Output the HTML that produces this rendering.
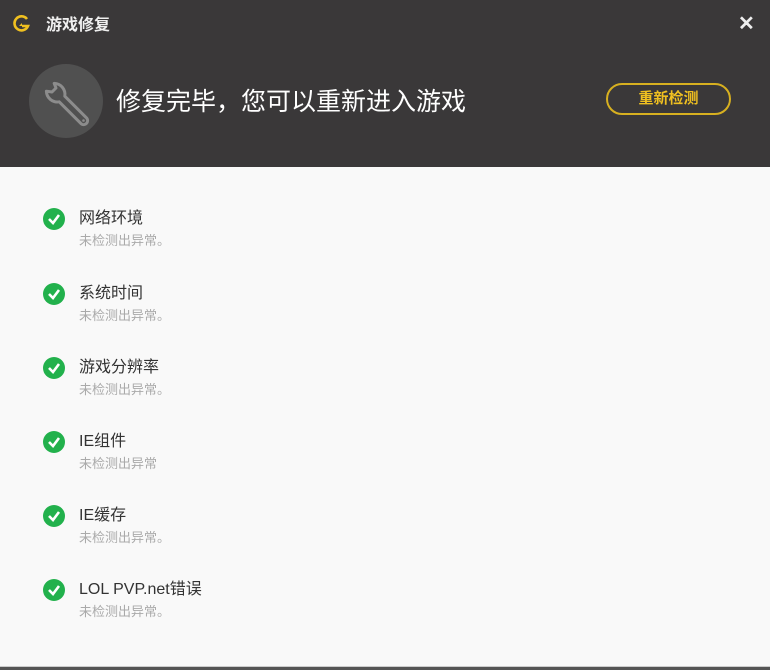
<!DOCTYPE html>
<html><head><meta charset="utf-8"><style>
*{margin:0;padding:0;box-sizing:border-box}
body{width:770px;height:670px;background:#fff;font-family:"Liberation Sans","Noto Sans CJK SC",sans-serif;position:relative;overflow:hidden}
.hd{position:absolute;left:0;top:0;width:770px;height:167px;background:#3a3839}
.bd{position:absolute;left:0;top:167px;width:770px;height:500px;background:#f9f9f9;border-bottom:1px solid #ccc}
.ft{position:absolute;left:0;top:667px;width:770px;height:3px;background:#555}
.t{position:absolute;left:46px;top:11px;color:#f0f0f0;font-size:16px;font-weight:bold}
.x{position:absolute;left:738px;top:11px;color:#eee;font-size:20px;font-weight:bold}
.circ{position:absolute;left:29px;top:64px;width:74px;height:74px;border-radius:50%;background:#505050}
.msg{position:absolute;left:116px;top:82px;color:#fff;font-size:25px}
.btn{position:absolute;left:606px;top:83px;width:125px;height:32px;border:2px solid #d7b020;border-radius:16px;color:#f0c020;font-size:15px;font-weight:bold;text-align:center;line-height:28px}
.it{position:absolute;left:43px}
.ck{position:absolute;left:0;top:2px;width:22px;height:22px;border-radius:50%;background:#22b14c}
.n{position:absolute;left:36px;top:-2px;font-size:16px;color:#333;white-space:nowrap}
.s{position:absolute;left:36px;top:24px;font-size:13px;color:#aaa;white-space:nowrap}
</style></head><body>
<div class="hd">
<svg style="position:absolute;left:13px;top:14px" width="18" height="20" viewBox="0 0 18 20"><path d="M14 5A7 7 0 1 0 15 12H9" fill="none" stroke="#f0c020" stroke-width="2.6"/><path d="M9 9l-3 3 3 0" fill="#f0c020"/></svg>
<div class="t">游戏修复</div>
<div class="x">✕</div>
<div class="circ"><svg width="74" height="74" viewBox="0 0 74 74"><path d="M35.8 32.2L57.8 54.2A4 4 0 0 1 52.2 59.8L30.2 37.8A11 11 0 0 1 17.4 27.2L23 28L27 24L25.2 19.4A11 11 0 0 1 35.8 32.2Z" fill="none" stroke="#8c8c8c" stroke-width="3" stroke-linejoin="round"/><circle cx="54.5" cy="56.5" r="1.3" fill="#8c8c8c"/></svg></div>
<div class="msg">修复完毕，您可以重新进入游戏</div>
<div class="btn">重新检测</div>
</div>
<div class="bd"></div>
<div class="ft"></div>
<div class="it" style="top:206px"><div class="ck"><svg width="22" height="22"><path d="M6 11l4 4 6-8" fill="none" stroke="#fff" stroke-width="2.6"/></svg></div><div class="n">网络环境</div><div class="s">未检测出异常。</div></div>
<div class="it" style="top:281px"><div class="ck"><svg width="22" height="22"><path d="M6 11l4 4 6-8" fill="none" stroke="#fff" stroke-width="2.6"/></svg></div><div class="n">系统时间</div><div class="s">未检测出异常。</div></div>
<div class="it" style="top:355px"><div class="ck"><svg width="22" height="22"><path d="M6 11l4 4 6-8" fill="none" stroke="#fff" stroke-width="2.6"/></svg></div><div class="n">游戏分辨率</div><div class="s">未检测出异常。</div></div>
<div class="it" style="top:429px"><div class="ck"><svg width="22" height="22"><path d="M6 11l4 4 6-8" fill="none" stroke="#fff" stroke-width="2.6"/></svg></div><div class="n">IE组件</div><div class="s">未检测出异常</div></div>
<div class="it" style="top:503px"><div class="ck"><svg width="22" height="22"><path d="M6 11l4 4 6-8" fill="none" stroke="#fff" stroke-width="2.6"/></svg></div><div class="n">IE缓存</div><div class="s">未检测出异常。</div></div>
<div class="it" style="top:577px"><div class="ck"><svg width="22" height="22"><path d="M6 11l4 4 6-8" fill="none" stroke="#fff" stroke-width="2.6"/></svg></div><div class="n">LOL PVP.net错误</div><div class="s">未检测出异常。</div></div>
</body></html>
